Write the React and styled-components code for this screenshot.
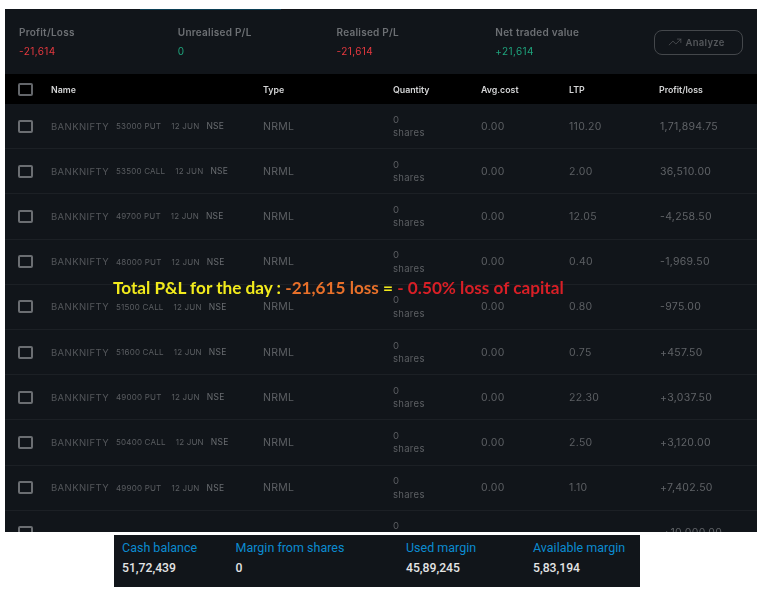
import styled, { createGlobalStyle } from "styled-components";
import { TrendingUp } from "lucide-react";

const GlobalStyle = createGlobalStyle`
  html, body {
    margin: 0;
    background: #fff;
  }
`;

const Page = styled.div`
  width: 761px;
  height: 592px;
  padding: 9px 4px 0 5px;
  box-sizing: border-box;
  font-family: Inter, "Liberation Sans", sans-serif;
  overflow: hidden;
`;

const Panel = styled.div`
  position: relative;
  height: 523px;
  background: #11151a;
  overflow: hidden;
  filter: blur(0.3px);
`;

const TabLine = styled.div`
  width: 141px;
  height: 1px;
  margin-left: 135px;
  background: #0c3f55;
`;

const Summary = styled.div`
  display: flex;
  align-items: center;
  height: 64px;
  padding: 0 14px;
`;

const Stat = styled.div`
  width: 159px;
  display: flex;
  flex-direction: column;
  gap: 8px;
`;

const StatLabel = styled.div`
  font-size: 10px;
  line-height: 11px;
  font-weight: 600;
  letter-spacing: 0.25px;
  color: #6d7074;
`;

const StatValue = styled.div`
  font-size: 10px;
  line-height: 11px;
  letter-spacing: 0.4px;
  color: ${(p) => (p.$up ? "#1ea37c" : "#e5383f")};
`;

const AnalyzeButton = styled.button`
  margin-left: auto;
  width: 89px;
  height: 25px;
  box-sizing: border-box;
  display: flex;
  align-items: center;
  justify-content: center;
  gap: 3px;
  padding: 0 4px 0 0;
  border: 1px solid #44474b;
  border-radius: 8px;
  background: transparent;
  font-family: inherit;
  font-size: 9.5px;
  font-weight: 600;
  letter-spacing: 0.3px;
  color: #54575b;
`;

const gridCols = "33px 212px 130px 88px 88px 90px 1fr";

const HeadRow = styled.div`
  display: grid;
  grid-template-columns: ${gridCols};
  align-items: center;
  height: 30px;
  padding-left: 13px;
  background: #000;
  font-size: 8.8px;
  font-weight: 600;
  color: #d4d5d6;
`;

const Row = styled.div`
  display: grid;
  grid-template-columns: ${gridCols};
  align-items: center;
  height: 45.2px;
  box-sizing: border-box;
  padding-left: 13px;
  border-bottom: 1px solid #1c2025;
  font-size: 10.5px;
  letter-spacing: 0.3px;
  color: #5c5f63;
`;

const CheckBox = styled.span`
  display: block;
  width: 15px;
  height: 13px;
  box-sizing: border-box;
  border: 2px solid ${(p) => (p.$head ? "#63666a" : "#6b6e72")};
  border-radius: 2px;
`;

const NameCell = styled.div`
  display: flex;
  align-items: center;
  white-space: nowrap;
`;

const Symbol = styled.span`
  font-size: 9.5px;
  letter-spacing: 0.4px;
  color: #53565a;
`;

const Small = styled.span`
  margin-left: ${(p) => p.$gap}px;
  font-size: 8px;
  letter-spacing: 0.2px;
  color: #5b5e62;
`;

const Exchange = styled.span`
  margin-left: 7px;
  font-size: 8.5px;
  color: #6a6d71;
`;

const Qty = styled.div`
  font-size: 9.5px;
  line-height: 13.5px;
  color: #5c5f63;
`;

const PnlCell = styled.div`
  padding-left: 1px;
  color: #606367;
`;

const Overlay = styled.div`
  position: absolute;
  left: 108px;
  top: 269px;
  font-family: Lato, sans-serif;
  font-size: 17.2px;
  line-height: 20px;
  font-weight: 700;
  white-space: nowrap;
  color: #f2ea1c;
`;

const Loss = styled.span`
  color: ${(p) => p.$tone};
`;

const Footer = styled.div`
  display: grid;
  grid-template-columns: 113.5px 170.5px 127px 1fr;
  width: 526px;
  height: 52px;
  margin: 3px 0 0 109px;
  padding: 5px 0 0 8px;
  box-sizing: border-box;
  background: #11151a;
  font-family: Roboto, sans-serif;
`;

const FootStat = styled.div`
  display: flex;
  flex-direction: column;
  gap: 5px;
`;

const FootLabel = styled.div`
  font-size: 12.5px;
  line-height: 15px;
  color: #0b8bd0;
  white-space: nowrap;
`;

const FootValue = styled.div`
  font-size: 12.2px;
  line-height: 16px;
  font-weight: 500;
  color: #e3e4e5;
`;

const stats = [
  { label: "Profit/Loss", value: "-21,614" },
  { label: "Unrealised P/L", value: "0", up: true },
  { label: "Realised P/L", value: "-21,614" },
  { label: "Net traded value", value: "+21,614", up: true },
];

const positions = [
  ["53000 PUT", "110.20", "1,71,894.75"],
  ["53500 CALL", "2.00", "36,510.00"],
  ["49700 PUT", "12.05", "-4,258.50"],
  ["48000 PUT", "0.40", "-1,969.50"],
  ["51500 CALL", "0.80", "-975.00"],
  ["51600 CALL", "0.75", "+457.50"],
  ["49000 PUT", "22.30", "+3,037.50"],
  ["50400 CALL", "2.50", "+3,120.00"],
  ["49900 PUT", "1.10", "+7,402.50"],
];

const footer = [
  ["Cash balance", "51,72,439"],
  ["Margin from shares", "0"],
  ["Used margin", "45,89,245"],
  ["Available margin", "5,83,194"],
];

export default function App() {
  return (
    <Page>
      <GlobalStyle />
      <Panel>
        <TabLine />
        <Summary>
          {stats.map((s) => (
            <Stat key={s.label}>
              <StatLabel>{s.label}</StatLabel>
              <StatValue $up={s.up}>{s.value}</StatValue>
            </Stat>
          ))}
          <AnalyzeButton>
            <TrendingUp size={14} strokeWidth={1.3} />
            Analyze
          </AnalyzeButton>
        </Summary>
        <HeadRow>
          <CheckBox $head />
          <div>Name</div>
          <div>Type</div>
          <div>Quantity</div>
          <div>Avg.cost</div>
          <div>LTP</div>
          <div>Profit/loss</div>
        </HeadRow>
        {positions.map(([strike, ltp, pnl]) => (
          <Row key={strike}>
            <CheckBox />
            <NameCell>
              <Symbol>BANKNIFTY</Symbol>
              <Small $gap={7}>{strike}</Small>
              <Small $gap={10}>12 JUN</Small>
              <Exchange>NSE</Exchange>
            </NameCell>
            <div>NRML</div>
            <Qty>
              0
              <br />
              shares
            </Qty>
            <div>0.00</div>
            <div>{ltp}</div>
            <PnlCell>{pnl}</PnlCell>
          </Row>
        ))}
        {/* last row is cut by the panel, only the top of these shows */}
        <Row>
          <CheckBox />
          <div />
          <div />
          <Qty>
            0
            <br />
            shares
          </Qty>
          <div />
          <div />
          <PnlCell>&nbsp;+10,000.00</PnlCell>
        </Row>
        <Overlay>
          Total P&amp;L for the day : <Loss $tone="#e8702a">-21,615 loss</Loss> ={" "}
          <Loss $tone="#d81f26">- 0.50% loss of capital</Loss>
        </Overlay>
      </Panel>
      <Footer>
        {footer.map(([label, value]) => (
          <FootStat key={label}>
            <FootLabel>{label}</FootLabel>
            <FootValue>{value}</FootValue>
          </FootStat>
        ))}
      </Footer>
    </Page>
  );
}
